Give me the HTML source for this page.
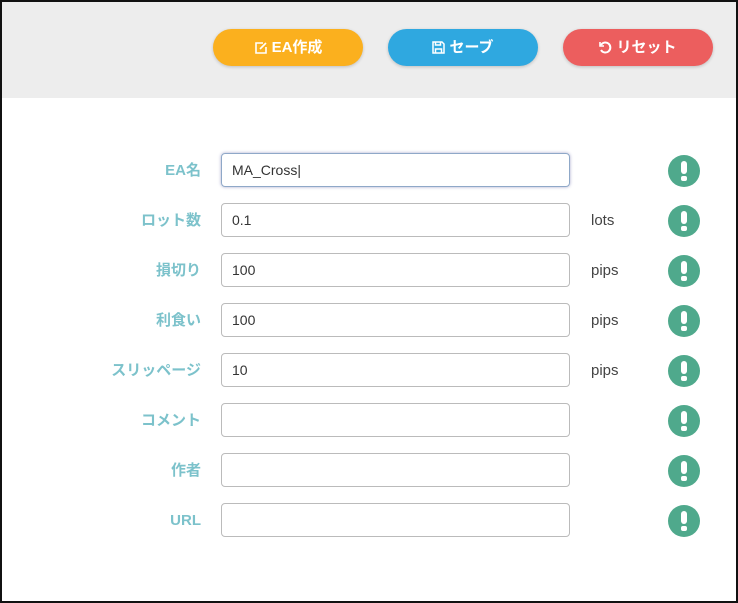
<!DOCTYPE html>
<html><head><meta charset="utf-8"><style>
body{margin:0;width:738px;height:603px;overflow:hidden;font-family:"Liberation Sans","Noto Sans CJK JP",sans-serif;}
.frame{position:absolute;left:0;top:0;width:734px;height:599px;border:2px solid #111;background:#fff;}
.hdr{position:absolute;left:0;top:0;width:734px;height:96px;background:#ededed;}
.btn{position:absolute;top:27px;width:150px;height:37px;border-radius:19px;color:#fff;font-weight:bold;font-size:15px;display:flex;align-items:center;justify-content:center;gap:4px;box-shadow:0 1px 3px rgba(0,0,0,.2);line-height:37px}
.btn svg{display:block}
.lbl{position:absolute;right:535px;width:140px;text-align:right;color:#7cc2cb;font-weight:bold;font-size:15px;height:34px;line-height:34px;}
.inp{position:absolute;left:219px;height:32px;border:1px solid #bbb;border-radius:4px;font-size:14px;color:#333;line-height:32px;padding-left:10px;width:337px}
.unit{position:absolute;left:589px;font-size:15px;color:#444;line-height:34px;height:34px}
.ic{position:absolute;left:666px;width:32px;height:32px;border-radius:50%;background:#4fa98c;}
.ic:before{content:"";position:absolute;left:13px;top:6px;width:6px;height:13px;border-radius:3px;background:#fff}
.ic:after{content:"";position:absolute;left:13px;top:21px;width:6px;height:5px;border-radius:2px;background:#fff}
</style></head><body><div class="frame">
<div class="hdr"></div>
<div class="btn" style="left:211px;background:#fbb01e"><svg width="14" height="14" viewBox="0 0 14 14" fill="none" stroke="#fff" stroke-width="1.6"><path d="M9 2H2v10h10V6"/><path d="M6 8l6-6"/></svg>EA作成</div>
<div class="btn" style="left:386px;background:#2fa8e0"><svg width="13" height="13" viewBox="0 0 13 13" fill="none" stroke="#fff" stroke-width="1.5"><path d="M1 1h9l2 2v9H1z"/><path d="M3.5 1v3h5V1M3.5 12V8h6v4"/></svg>セーブ</div>
<div class="btn" style="left:561px;background:#ec5e5e"><svg width="13" height="13" viewBox="0 0 13 13" fill="none" stroke="#fff" stroke-width="2"><path d="M2 4a5 5 0 1 1 0 5"/><path d="M1 1v4h4" stroke-width="1.6"/></svg>リセット</div>

<div class="lbl" style="top:152px">EA名</div>
<div class="inp" style="top:151px;border-color:#8fa8c8;box-shadow:0 0 3px #aac">MA_Cross|</div>
<div class="ic" style="top:153px"></div>

<div class="lbl" style="top:202px">ロット数</div>
<div class="inp" style="top:201px">0.1</div>
<div class="unit" style="top:202px">lots</div>
<div class="ic" style="top:203px"></div>

<div class="lbl" style="top:252px">損切り</div>
<div class="inp" style="top:251px">100</div>
<div class="unit" style="top:252px">pips</div>
<div class="ic" style="top:253px"></div>

<div class="lbl" style="top:302px">利食い</div>
<div class="inp" style="top:301px">100</div>
<div class="unit" style="top:302px">pips</div>
<div class="ic" style="top:303px"></div>

<div class="lbl" style="top:352px">スリッページ</div>
<div class="inp" style="top:351px">10</div>
<div class="unit" style="top:352px">pips</div>
<div class="ic" style="top:353px"></div>

<div class="lbl" style="top:402px">コメント</div>
<div class="inp" style="top:401px"></div>
<div class="ic" style="top:403px"></div>

<div class="lbl" style="top:452px">作者</div>
<div class="inp" style="top:451px"></div>
<div class="ic" style="top:453px"></div>

<div class="lbl" style="top:502px">URL</div>
<div class="inp" style="top:501px"></div>
<div class="ic" style="top:503px"></div>
</div></body></html>
